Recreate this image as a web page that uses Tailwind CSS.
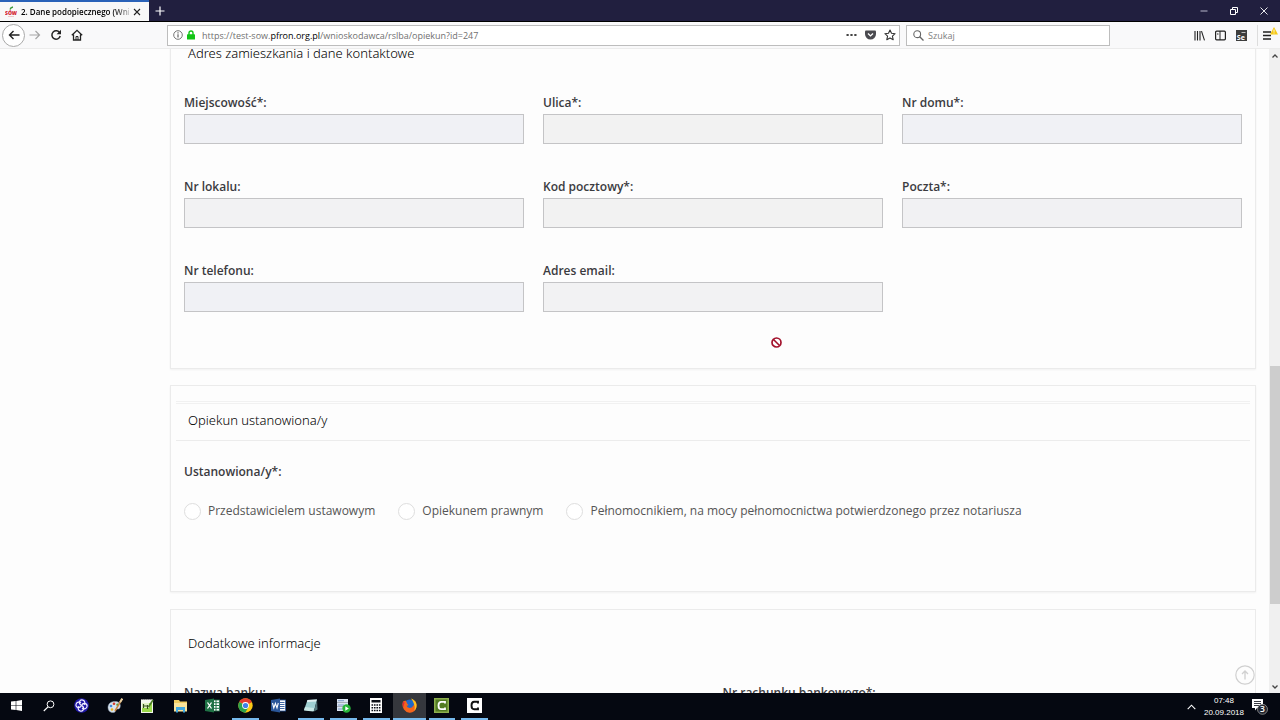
<!DOCTYPE html>
<html lang="pl">
<head>
<meta charset="utf-8">
<title>2. Dane podopiecznego (Wniosek)</title>
<script src="https://cdn.jsdelivr.net/npm/@tailwindcss/browser@4"></script>
</head>
<body class="h-screen flex flex-col overflow-hidden bg-[#fdfdfd] font-['Open_Sans',sans-serif] text-[#3b3b3f]">

  <!-- tabs -->
  <header class="flex h-[22px] shrink-0 items-stretch border-b border-black bg-[#211f3f] text-white">
    <div class="flex w-[149px] items-center border-t-2 border-[#2a62b8] bg-[#f8f8f8] pl-[5px] text-black">
      <svg class="mr-1 h-3 w-3 shrink-0" viewBox="0 0 12 12">
        <path d="M5 3.500q.5-2 3-2.500" fill="none" stroke="#3f9a3c" stroke-width="1.300"/>
        <text x="0" y="8.500" font-family="Open Sans" font-size="5" font-weight="800" fill="#d3202f">SÓW</text>
        <path d="M3 10.500h6" stroke="#e5a7aa" stroke-width=".6"/>
      </svg>
      <span class="w-[108px] overflow-hidden whitespace-nowrap bg-linear-to-r from-black from-85% to-black/30 bg-clip-text font-['Open_Sans',sans-serif] text-[8px] font-semibold text-transparent">2. Dane podopiecznego (Wnios</span>
      <button aria-label="Zamknij kartę" class="ml-1"><svg class="h-2 w-2" viewBox="0 0 8 8"><path d="M1 1l6 6M7 1l-6 6" stroke="#222" stroke-width="1.100"/></svg></button>
    </div>
    <button aria-label="Nowa karta" class="ml-[6px]"><svg class="h-[10px] w-[10px]" viewBox="0 0 10 10"><path d="M5 .5v9M.5 5h9" stroke="#fff" stroke-width="1.200"/></svg></button>
    <div class="ml-auto flex items-center gap-[22px] pr-3">
      <button aria-label="Minimalizuj"><svg class="h-2 w-2" viewBox="0 0 8 8"><path d="M.5 4h7" stroke="#b9b8cc"/></svg></button>
      <button aria-label="Przywróć"><svg class="h-2 w-2" viewBox="0 0 8 8"><path d="M.5 2.500h5v5h-5zM2.500 2.500v-2h5v5h-2" fill="none" stroke="#fff"/></svg></button>
      <button aria-label="Zamknij"><svg class="h-2 w-2" viewBox="0 0 8 8"><path d="M.5.5l7 7M7.500.5l-7 7" stroke="#fff" stroke-width=".9"/></svg></button>
    </div>
  </header>

  <!-- toolbar -->
  <nav class="flex h-[27px] shrink-0 items-center border-b border-[#ececec] bg-[#f9f9fa]">
    <div class="flex w-[167px] shrink-0 items-center gap-[9px] pl-[2px]">
      <div class="flex items-center gap-1">
        <button aria-label="Wstecz" class="flex h-[23px] w-[23px] items-center justify-center rounded-full border border-[#a9a9a9] bg-white"><svg class="h-3 w-3" viewBox="0 0 12 12"><path d="M11.500 6h-10M5.500 2L1.500 6l4 4" fill="none" stroke="#222" stroke-width="1.400"/></svg></button>
        <button aria-label="Dalej"><svg class="h-3 w-3" viewBox="0 0 12 12"><path d="M.5 6h10M6.500 2l4 4-4 4" fill="none" stroke="#a5a5a5" stroke-width="1.200"/></svg></button>
      </div>
      <button aria-label="Odśwież"><svg class="h-3 w-3" viewBox="0 0 12 12"><path d="M9.800 4A4.200 4.200 0 1 0 10.200 7" fill="none" stroke="#222" stroke-width="1.500"/><path d="M11 .8v4.400H6.600z" fill="#222"/></svg></button>
      <button aria-label="Strona główna"><svg class="h-3 w-3" viewBox="0 0 12 12"><path d="M.8 6.300L6 1.300l5.200 5M2.500 5.500v5.500h7V5.500" fill="none" stroke="#222" stroke-width="1.300"/><path d="M5 11V7.500h2V11" fill="none" stroke="#222" stroke-width="1"/></svg></button>
    </div>
    <div class="flex h-[21px] flex-1 items-center border border-[#bdbdbd] bg-white pl-[5px] pr-[3px]">
      <svg class="h-[10px] w-[10px]" viewBox="0 0 10 10"><circle cx="5" cy="5" r="4.300" fill="none" stroke="#666" stroke-width=".9"/><path d="M5 4.300v3.200M5 2.300v1.200" stroke="#555" stroke-width="1.100"/></svg>
      <svg class="ml-1 h-[10px] w-[8px]" viewBox="0 0 8 10"><path d="M2 5V3a2 2 0 0 1 4 0v2" fill="none" stroke="#12c416" stroke-width="1.400"/><rect y="4.300" width="8" height="5.200" rx=".6" fill="#12c416"/></svg>
      <div role="textbox" aria-label="Adres" contenteditable="true" spellcheck="false" class="ml-[7px] flex-1 pt-0.5 text-[9px] text-[#707070] outline-none">https://test-sow.<span class="text-black">pfron.org.pl</span>/wnioskodawca/rslba/opiekun?id=247</div>
      <div class="flex items-center gap-2">
        <button aria-label="Więcej"><svg class="h-3 w-[11px]" viewBox="0 0 11 12"><path d="M.5 6h2.200M4.400 6h2.200M8.300 6h2.200" stroke="#444" stroke-width="2"/></svg></button>
        <button aria-label="Pocket"><svg class="h-3 w-[11px]" viewBox="0 0 11 12"><path d="M1 1.500h9q1 0 1 1V5a5.500 5.500 0 0 1-11 0V2.500q0-1 1-1z" fill="#4a4a4f"/><path d="M3 4.500l2.500 2.400L8 4.500" fill="none" stroke="#fff" stroke-width="1.400"/></svg></button>
        <button aria-label="Dodaj zakładkę"><svg class="h-3 w-3" viewBox="0 0 12 12"><path d="M6 1l1.500 3.300 3.600.4-2.700 2.400.8 3.600L6 8.900l-3.200 1.800.8-3.600L.9 4.700l3.600-.4z" fill="none" stroke="#333" stroke-width="1.100" stroke-linejoin="round"/></svg></button>
      </div>
    </div>
    <div class="ml-[6px] flex h-[21px] w-[204px] items-center border border-[#bdbdbd] bg-white pl-[6px]">
      <svg class="h-[11px] w-[11px] shrink-0" viewBox="0 0 11 11"><circle cx="4.200" cy="4.200" r="3.400" fill="none" stroke="#666" stroke-width="1.100"/><path d="M6.700 6.700l3.800 3.800" stroke="#666" stroke-width="1.300"/></svg>
      <input type="search" aria-label="Szukaj" placeholder="Szukaj" class="ml-1 w-full pt-0.5 text-[9px] outline-none placeholder:text-[#808080]">
    </div>
    <div class="flex w-[170px] shrink-0 items-center justify-end gap-[10px] pr-[2px]">
      <button aria-label="Biblioteka"><svg class="h-[11px] w-[11px]" viewBox="0 0 11 11"><path d="M1 1v9.500M3.500 1v9.500M6 1v9.500M7.500 1.200l3 9.200" stroke="#222" stroke-width="1.100"/></svg></button>
      <button aria-label="Panel boczny"><svg class="h-[11px] w-[11px]" viewBox="0 0 11 11"><rect x=".6" y="1.200" width="9.800" height="8.600" rx="1" fill="none" stroke="#222" stroke-width="1.200"/><path d="M5 1v9" stroke="#222"/><path d="M2 4h1.500" stroke="#222"/></svg></button>
      <button aria-label="Selenium"><svg class="h-[11px] w-[11px]" viewBox="0 0 11 11"><rect width="11" height="11" fill="#3d3d3d"/><text x=".8" y="9.500" font-family="Open Sans" font-size="7" font-weight="700" fill="#fff">Se</text><path d="M5.500 2.500h4" stroke="#ddd" stroke-width=".8"/></svg></button>
      <button aria-label="Menu" class="border-l border-[#ddd] pl-[5px]"><svg class="h-[21px] w-[15px]" viewBox="0 0 15 21"><path d="M0 7h8M0 10.500h8M0 14h8" stroke="#222" stroke-width="1.400"/><path d="M11 2l4 7.500H7z" fill="#f6c917"/><path d="M11 4.500v2.300M11 7.500v1" stroke="#fff" stroke-width=".9"/></svg></button>
    </div>
  </nav>

  <div class="relative flex min-h-0 flex-1">
    <main class="flex-1 overflow-hidden pl-[170px] pr-[13px]">
      <!-- address -->
      <section class="-mt-[7px] border border-[#ebebeb] px-[13px] pb-14 shadow-xs">
        <h2 class="pl-1 font-['Noto_Sans',sans-serif] text-[13px] leading-5 font-light text-black">Adres zamieszkania i dane kontaktowe</h2>
        <div class="mt-[30px] grid grid-cols-3 gap-x-[19px] gap-y-[33px] text-[12px] leading-5 font-semibold">
          <div><label for="city">Miejscowość*:</label><input id="city" class="mt-px block h-[30px] w-full border border-[#c4c4c6] bg-[#f0f1f5] px-2"></div>
          <div><label for="street">Ulica*:</label><input id="street" class="mt-px block h-[30px] w-full border border-[#c4c4c6] bg-[#f2f2f2] px-2"></div>
          <div><label for="house">Nr domu*:</label><input id="house" class="mt-px block h-[30px] w-full border border-[#c4c4c6] bg-[#f0f1f5] px-2"></div>
          <div><label for="flat">Nr lokalu:</label><input id="flat" class="mt-px block h-[30px] w-full border border-[#c4c4c6] bg-[#f2f2f3] px-2"></div>
          <div><label for="zip">Kod pocztowy*:</label><input id="zip" class="mt-px block h-[30px] w-full border border-[#c4c4c6] bg-[#f2f2f2] px-2"></div>
          <div><label for="post">Poczta*:</label><input id="post" class="mt-px block h-[30px] w-full border border-[#c4c4c6] bg-[#f1f1f3] px-2"></div>
          <div><label for="phone">Nr telefonu:</label><input id="phone" class="mt-px block h-[30px] w-full border border-[#c4c4c6] bg-[#f0f1f5] px-2"></div>
          <div><label for="email">Adres email:</label><input id="email" type="email" class="mt-px block h-[30px] w-full border border-[#c4c4c6] bg-[#f2f2f3] px-2"></div>
        </div>
      </section>

      <!-- guardian -->
      <section class="mt-4 border border-[#ebebeb] pt-[15px] pb-[70px] shadow-xs">
        <h2 class="mx-[5px] h-10 border-t-3 border-b border-t-[#f1f1f1] border-b-[#ececec] [border-top-style:double] pt-[6px] pl-3 font-['Noto_Sans',sans-serif] text-[13px] leading-5 font-light text-black">Opiekun ustanowiona/y</h2>
        <fieldset class="px-[13px] pt-[21px] text-[12px] leading-5">
          <legend class="float-left w-full font-semibold">Ustanowiona/y*:</legend>
          <div class="clear-both flex gap-[23px] pt-[19px] text-[#555]">
            <label class="flex items-center gap-[7px]"><input type="radio" name="guardian" class="h-[17px] w-[17px] appearance-none rounded-full border border-[#dedede] bg-white">Przedstawicielem ustawowym</label>
            <label class="flex items-center gap-[7px]"><input type="radio" name="guardian" class="h-[17px] w-[17px] appearance-none rounded-full border border-[#dedede] bg-white">Opiekunem prawnym</label>
            <label class="flex items-center gap-[7px]"><input type="radio" name="guardian" class="h-[17px] w-[17px] appearance-none rounded-full border border-[#dedede] bg-white">Pełnomocnikiem, na mocy pełnomocnictwa potwierdzonego przez notariusza</label>
          </div>
        </fieldset>
      </section>

      <!-- bank -->
      <section class="mt-[17px] border border-[#ebebeb] px-[13px] pt-[23px] pb-14">
        <h2 class="pl-1 font-['Noto_Sans',sans-serif] text-[13px] leading-5 font-light text-black">Dodatkowe informacje</h2>
        <div class="mt-[30px] grid grid-cols-2 gap-x-[19px] text-[12px] leading-5 font-semibold">
          <div><label for="bank">Nazwa banku:</label><input id="bank" class="mt-px block h-[30px] w-full border border-[#c4c4c6] bg-[#f2f2f2] px-2"></div>
          <div><label for="account">Nr rachunku bankowego*:</label><input id="account" class="mt-px block h-[30px] w-full border border-[#c4c4c6] bg-[#f2f2f2] px-2"></div>
        </div>
      </section>
    </main>

    <!-- scrollbar -->
    <div class="flex w-[11px] shrink-0 flex-col items-center bg-[#f0f0f0]">
      <svg class="mt-[3px] h-2 w-2" viewBox="0 0 8 8"><path d="M1.500 5.500L4 3l2.500 2.500" fill="none" stroke="#444" stroke-width="1.300"/></svg>
      <div class="flex-305"></div>
      <div class="w-[10px] flex-236 bg-[#cdcdcd]"></div>
      <div class="flex-79"></div>
      <svg class="mb-[2px] h-2 w-2" viewBox="0 0 8 8"><path d="M1.500 2.500L4 5l2.500-2.500" fill="none" stroke="#444" stroke-width="1.300"/></svg>
    </div>

    <button aria-label="Do góry" class="absolute right-[25px] bottom-[8px]"><svg class="h-5 w-5" viewBox="0 0 20 20"><circle cx="10" cy="10" r="9.200" fill="none" stroke="#d0d0d0" stroke-width="1.200"/><path d="M10 14.500V6M7 9l3-3 3 3" fill="none" stroke="#d0d0d0" stroke-width="1.300"/></svg></button>
    <!-- not-allowed cursor -->
    <svg class="absolute top-[288px] left-[771px] h-[11px] w-[11px]" viewBox="0 0 11 11"><circle cx="5.500" cy="5.500" r="4.500" fill="#fff" stroke="#a3122c" stroke-width="1.700"/><path d="M2.500 2.500l6 6" stroke="#a3122c" stroke-width="1.600"/></svg>
  </div>

  <!-- taskbar -->
  <footer class="flex h-[27px] shrink-0 items-stretch bg-[#050811] text-white">
    <div class="grid w-[491px] grid-cols-15">
      <button aria-label="Start" class="mx-[3px] flex items-center justify-center border-b-2 border-transparent"><svg class="h-[11px] w-[11px]" viewBox="0 0 11 11"><path d="M0 1.600L4.700 1v4.200H0zM5.300.9L11 .1v5.100H5.300zM0 5.800h4.700V10L0 9.400zM5.300 5.800H11v5.100l-5.700-.8z" fill="#fff"/></svg></button>
      <button aria-label="Szukaj" class="mx-[3px] flex items-center justify-center border-b-2 border-transparent"><svg class="h-3 w-3" viewBox="0 0 12 12"><circle cx="7.500" cy="4.300" r="3.400" fill="none" stroke="#fff"/><path d="M5 6.800L.8 11" stroke="#fff" stroke-width="1.200"/></svg></button>
      <button aria-label="Przeglądarka" class="mx-[3px] flex items-center justify-center border-b-2 border-transparent"><svg class="h-[15px] w-[15px]" viewBox="0 0 15 15"><circle cx="7.500" cy="7.500" r="7.300" fill="#2018a8"/><g fill="none" stroke="#f1f0ff" stroke-width="1.200" transform="rotate(25 7.500 7.500)"><path d="M7.500 7.500C3.500 7.500 3 2.500 6.500 2c2.500-.3 3.500 2 3 4"/><path d="M7.500 7.500C7.500 3.500 12.500 3 13 6.500c.3 2.500-2 3.500-4 3"/><path d="M7.500 7.500c4 0 4.500 5 1 5.500-2.500.3-3.500-2-3-4"/><path d="M7.500 7.500c0 4-5 4.500-5.500 1-.3-2.500 2-3.500 4-3"/></g></svg></button>
      <button aria-label="Paint" class="mx-[3px] flex items-center justify-center border-b-2 border-transparent"><svg class="h-4 w-4" viewBox="0 0 16 16"><path d="M1 9.500C1 5 5 3 9 3.500s5 3.500 4 6-3 1-4 2 0 3-3 3-5-2-5-5z" fill="#d9e3ee" stroke="#8fa1b5" stroke-width=".5"/><circle cx="4" cy="8" r="1.300" fill="#3f88d8"/><circle cx="7" cy="5.800" r="1.300" fill="#d33c2b"/><circle cx="10.500" cy="6.800" r="1.200" fill="#46a640"/><circle cx="5" cy="11.500" r="1.300" fill="#e9b422"/><path d="M15 1L8 13" stroke="#c98343" stroke-width="1.500"/><path d="M15.300.5l-2.200 3.700" stroke="#e8cfa0" stroke-width="2"/></svg></button>
      <button aria-label="Notepad++" class="mx-[3px] flex items-center justify-center border-b-2 border-transparent"><svg class="h-4 w-[14px]" viewBox="0 0 14 16"><path d="M1 1.500h12V15H1z" fill="#f3f6ec"/><path d="M2 5h10v9H2z" fill="#9ad84a"/><path d="M2 5h7v5H2z" fill="#dff0c4"/><path d="M1 1.500h12" stroke="#999" stroke-dasharray="1 1"/><path d="M3.500 6v4M3.500 8h4M7.500 7v4" stroke="#35521b" stroke-width="1.200" fill="none"/><path d="M13 2L8.500 9" stroke="#4b7d26" stroke-width="1.600"/></svg></button>
      <button aria-label="Eksplorator plików" class="mx-[3px] flex items-center justify-center border-b-2 border-transparent"><svg class="h-[14px] w-[15px]" viewBox="0 0 15 14"><path d="M1 1h5l1 1.500h7V12H1z" fill="#f0cd62"/><path d="M1 4h13v8.500H1z" fill="#fae49a"/><path d="M3 8h9v5.500h-2V11H5v2.500H3z" fill="#42a9e0"/></svg></button>
      <button aria-label="Excel" class="mx-[3px] flex items-center justify-center border-b-2 border-transparent"><svg class="h-[15px] w-[15px]" viewBox="0 0 15 15"><rect x="7" y="2" width="7.500" height="11" fill="#fff" stroke="#1f7145" stroke-width=".8"/><path d="M8 4.700h6M8 7.500h6M8 10.300h6M11 2v11" stroke="#1f7145"/><path d="M0 2l9-1.500v14L0 13z" fill="#1f7145"/><path d="M2.500 4.500l4 6M6.500 4.500l-4 6" stroke="#fff" stroke-width="1.300"/></svg></button>
      <button aria-label="Chrome" class="mx-[3px] flex items-center justify-center border-b-2 border-[#76b9ed]"><svg class="h-[15px] w-[15px]" viewBox="0 0 15 15"><circle cx="7.500" cy="7.500" r="7.200" fill="#fbc916"/><path d="M7.500 7.500L1.300 3.900A7.200 7.200 0 0 1 13.700 3.900z" fill="#e33b2e"/><path d="M13.700 3.900H7.500v3.600z" fill="#e33b2e"/><path d="M1.300 3.900A7.200 7.200 0 0 0 7.200 14.700l3.200-5.500-2.900-1.700z" fill="#2ba24c"/><circle cx="7.500" cy="7.500" r="3.400" fill="#fff"/><circle cx="7.500" cy="7.500" r="2.600" fill="#3f80ea"/></svg></button>
      <button aria-label="Word" class="mx-[3px] flex items-center justify-center border-b-2 border-transparent"><svg class="h-[15px] w-[15px]" viewBox="0 0 15 15"><rect x="7" y="2" width="7.500" height="11" fill="#fff" stroke="#2a5699" stroke-width=".8"/><path d="M9 4.500h4.500M9 6.500h4.500M9 8.500h4.500M9 10.500h4.500" stroke="#2a5699" stroke-width=".9"/><path d="M0 2l9-1.500v14L0 13z" fill="#2a5699"/><path d="M1.500 5l1.300 5 1.600-4.500L6 10l1.300-5" fill="none" stroke="#fff" stroke-width="1.100"/></svg></button>
      <button aria-label="Notatnik" class="mx-[3px] flex items-center justify-center border-b-2 border-[#76b9ed]"><svg class="h-[15px] w-[15px]" viewBox="0 0 15 15"><path d="M4.500 2l9.500-.5-3 11.500-10-1z" fill="#9fcfd2"/><path d="M4.500 2l9.500-.5-.6 2-9.500.5z" fill="#e1eff0"/><path d="M14 1.500l.5 10-3.500 2z" fill="#54777c"/><path d="M2 9l9 1-.5 3.500-9.500-1z" fill="#c9e8e6"/></svg></button>
      <button aria-label="Serwer" class="mx-[3px] flex items-center justify-center border-b-2 border-[#76b9ed]"><svg class="h-[15px] w-[15px]" viewBox="0 0 15 15"><path d="M1 1h11v3.700H1zM1 5h11v3.700H1zM1 9h11v4H1z" fill="#dbe4f2"/><path d="M2 2.700h6M2 7h6M2 11h4" stroke="#7d9ac8"/><circle cx="10.500" cy="10.500" r="4.200" fill="#27b53a"/><path d="M9.300 8.300l3.500 2.200-3.500 2.200z" fill="#fff"/></svg></button>
      <button aria-label="Kalkulator" class="mx-[3px] flex items-center justify-center border-b-2 border-[#76b9ed]"><svg class="h-[15px] w-3" viewBox="0 0 12 15"><path d="M0 0h12v15H0z" fill="#fff"/><path d="M1.500 2h9v2.500h-9z" fill="#0a0d15"/><path d="M1.500 7h9M1.500 9.800h9M1.500 12.600h9" stroke="#0a0d15" stroke-width="1.500" stroke-dasharray="1.600 .86"/></svg></button>
      <button aria-label="Firefox" class="flex items-center justify-center border-b-2 border-[#76b9ed] bg-[#35373d]"><svg class="h-[15px] w-[15px]" viewBox="0 0 15 15"><circle cx="7.700" cy="7.500" r="6" fill="#2068c9"/><path d="M1 3.500Q-.5 8 2 11.500t6 3.200q5-.4 6.300-5T12.500 2q.5 3-1 5.500T7.500 10Q5 9.500 4.500 7.500q1 .5 2-.5-1.500-1-2-3L3.500 2.500z" fill="#f4641c"/><path d="M9 .6q4 1.200 5.400 5.400.6 4-2 6.700 1-4-.4-6.700Q11 3 9 .6z" fill="#fdc321"/><path d="M1 4Q.2 7 1.800 10q-.2-4 .9-5.500z" fill="#e5213f"/></svg></button>
      <button aria-label="Camtasia" class="mx-[3px] flex items-center justify-center border-b-2 border-[#76b9ed]"><svg class="h-[15px] w-[15px]" viewBox="0 0 15 15"><path d="M0 0h15v15H0z" fill="#8db04e"/><path d="M1.500 1.500h12v12h-12z" fill="#527b22"/><path d="M11 5.500V3.800H7.200Q4.500 3.800 4.500 7.500t2.700 3.700H11V9.500" fill="none" stroke="#fff" stroke-width="1.800"/></svg></button>
      <button aria-label="Rejestrator" class="mx-[3px] flex items-center justify-center border-b-2 border-[#76b9ed]"><svg class="h-[15px] w-[15px]" viewBox="0 0 15 15"><path d="M0 0h15v15H0z" fill="#fff"/><path d="M11 5.500V3.800H7.200Q4.500 3.800 4.500 7.500t2.700 3.700H11V9.500" fill="none" stroke="#111" stroke-width="1.900"/></svg></button>
    </div>
    <div class="ml-auto flex items-center gap-2 pr-3">
      <button aria-label="Ukryte ikony"><svg class="h-[6px] w-[9px]" viewBox="0 0 9 6"><path d="M.7 5.200l3.800-4 3.800 4" fill="none" stroke="#fff" stroke-width="1.100"/></svg></button>
      <div class="flex flex-col items-center font-['Liberation_Sans',sans-serif] text-[8px] leading-3 whitespace-nowrap"><p>07:48</p><p>20.09.2018</p></div>
      <button aria-label="Powiadomienia"><svg class="h-[17px] w-4" viewBox="0 0 16 17"><path d="M0 1h11v9H5l-2 2.500V10H0z" fill="#fff"/><path d="M2 3.500h7M2 5.500h7M2 7.500h7" stroke="#050811" stroke-width=".8"/><circle cx="10.500" cy="11.300" r="5" fill="#23262e" stroke="#aaa" stroke-width=".7"/><text x="8" y="14.400" font-family="Open Sans" font-size="8.500" font-weight="600" fill="#fff">3</text></svg></button>
    </div>
  </footer>
</body>
</html>
